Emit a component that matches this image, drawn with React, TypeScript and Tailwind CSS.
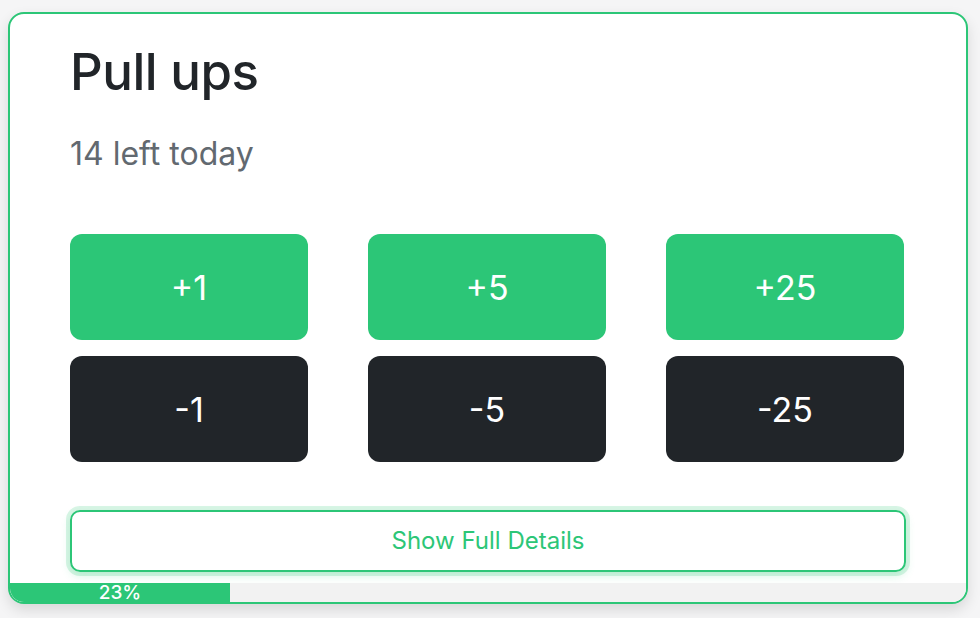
import React from "react";

export default function App() {
  const font = { fontFamily: "Inter, 'Noto Sans', sans-serif" };
  const plus = ["+1", "+5", "+25"];
  const minus = ["-1", "-5", "-25"];
  return (
    <div className="w-[980px] h-[618px] bg-[#f5f5f6] pt-[12px] pl-[8px]" style={font}>
      <div className="w-[960px] h-[592px] bg-white border-2 border-[#2cc677] rounded-[16px] overflow-hidden flex flex-col shadow-[0_6px_14px_rgba(0,0,0,0.12)]">
        <div className="flex-1 pl-[60px] pt-[28px]">
          <h1 className="text-[51px] leading-[60px] font-medium text-[#212529] tracking-[-0.5px]">Pull ups</h1>
          <p className="mt-[32px] text-[32px] leading-[40px] text-[#626970]">14 left today</p>
          <div className="mt-[60px] w-[834px] grid grid-cols-3 gap-x-[60px] gap-y-[16px]">
            {plus.map((t) => (
              <div key={t} className="h-[106px] rounded-[12px] bg-[#2cc677] text-white flex items-center justify-center text-[34px]">
                {t}
              </div>
            ))}
            {minus.map((t) => (
              <div key={t} className="h-[106px] rounded-[12px] bg-[#212529] text-white flex items-center justify-center text-[34px]">
                {t}
              </div>
            ))}
          </div>
          <div className="mt-[48px] w-[836px] h-[62px] rounded-[10px] border-2 border-[#2cc677] flex items-center justify-center text-[24px] text-[#2cc677] shadow-[0_0_0_4px_rgba(44,198,119,0.18),0_4px_10px_rgba(44,198,119,0.2)]">
            Show Full Details
          </div>
        </div>
        <div className="h-[19px] bg-[#f2f2f2] flex">
          <div className="w-[23%] bg-[#2cc677] text-white text-[19px] font-medium leading-[19px] text-center">23%</div>
        </div>
      </div>
    </div>
  );
}
